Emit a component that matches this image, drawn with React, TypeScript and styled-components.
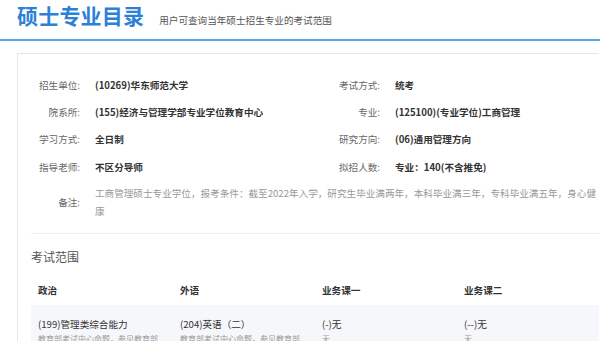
import styled, { createGlobalStyle } from "styled-components";

const GlobalStyle = createGlobalStyle`
  body {
    margin: 0;
    background: #fff;
    font-family: "Noto Sans CJK SC", "Liberation Sans", sans-serif;
    color: #333;
  }
`;

const Header = styled.div`
  display: flex;
  align-items: baseline;
  height: 41px;
  padding-left: 17px;
  border-bottom: 2px solid #5aa6e3;
  box-sizing: border-box;
`;

const Title = styled.h1`
  margin: 0;
  font-size: 21px;
  line-height: 30px;
  font-weight: 700;
  color: #2d80d8;
  letter-spacing: 0.2px;
`;

const Subtitle = styled.span`
  margin-left: 15px;
  font-size: 9.6px;
  color: #555;
`;

const Card = styled.div`
  margin: 12px 1px 0 17px;
  border-left: 1px solid #e6e6e6;
  border-top: 1px solid #e6e6e6;
  padding-left: 13px;
`;

const Info = styled.div`
  padding-top: 17px;
  padding-bottom: 13px;
  border-bottom: 1px solid #eee;
`;

const InfoGrid = styled.div`
  display: grid;
  grid-template-columns: 300px 1fr;
`;

const Field = styled.div<{ wide?: boolean }>`
  display: flex;
  align-items: center;
  grid-column: ${p => (p.wide ? "1 / -1" : "auto")};
  min-height: 27.3px;
  margin-top: ${p => (p.wide ? "4px" : "0")};
`;

const Label = styled.span`
  width: 49px;
  flex: none;
  text-align: right;
  font-size: 9.6px;
  color: #666;
  white-space: nowrap;
`;

const Value = styled.span<{ muted?: boolean }>`
  margin-left: 15px;
  font-size: 9.6px;
  line-height: 18px;
  font-weight: ${p => (p.muted ? 400 : 700)};
  color: ${p => (p.muted ? "#999" : "#333")};
`;

const SectionTitle = styled.h2`
  margin: 13px 0 0;
  font-size: 12px;
  line-height: 20px;
  font-weight: 400;
  color: #555;
`;

const Table = styled.div`
  margin-top: 8px;
`;

const TableRow = styled.div<{ head?: boolean }>`
  display: grid;
  grid-template-columns: repeat(4, 1fr);
  background: ${p => (p.head ? "#fff" : "#f5f7fa")};
  height: ${p => (p.head ? "30px" : "auto")};
  align-items: ${p => (p.head ? "center" : "start")};
  padding-top: ${p => (p.head ? "0" : "11px")};
`;

const HeadCell = styled.div`
  padding-left: 7px;
  font-size: 9.6px;
  font-weight: 700;
  color: #333;
`;

const Cell = styled.div`
  padding: 0 15px 0 7px;
`;

const CellMain = styled.div`
  font-size: 9.6px;
  line-height: 16px;
  color: #333;
`;

const CellDesc = styled.div`
  font-size: 8px;
  line-height: 14px;
  color: #999;
`;

const fields = [
  ["招生单位:", "(10269)华东师范大学"],
  ["考试方式:", "统考"],
  ["院系所:", "(155)经济与管理学部专业学位教育中心"],
  ["专业:", "(125100)(专业学位)工商管理"],
  ["学习方式:", "全日制"],
  ["研究方向:", "(06)通用管理方向"],
  ["指导老师:", "不区分导师"],
  ["拟招人数:", "专业：140(不含推免)"],
];

const subjects = [
  ["政治", "(199)管理类综合能力", "教育部考试中心命题，参见教育部考试大纲"],
  ["外语", "(204)英语（二）", "教育部考试中心命题，参见教育部考试大纲"],
  ["业务课一", "(-)无", "无"],
  ["业务课二", "(--)无", "无"],
];

export default function App() {
  return (
    <>
      <GlobalStyle />
      <Header>
        <Title>硕士专业目录</Title>
        <Subtitle>用户可查询当年硕士招生专业的考试范围</Subtitle>
      </Header>
      <Card>
        <Info>
          <InfoGrid>
            {fields.map(([label, value]) => (
              <Field key={label}>
                <Label>{label}</Label>
                <Value>{value}</Value>
              </Field>
            ))}
            <Field wide>
              <Label>备注:</Label>
              <Value muted>
                工商管理硕士专业学位，报考条件：截至2022年入学，研究生毕业满两年，本科毕业满三年，专科毕业满五年，身心健康
              </Value>
            </Field>
          </InfoGrid>
        </Info>
        <SectionTitle>考试范围</SectionTitle>
        <Table>
          <TableRow head>
            {subjects.map(([head]) => (
              <HeadCell key={head}>{head}</HeadCell>
            ))}
          </TableRow>
          <TableRow>
            {subjects.map(([head, main, desc]) => (
              <Cell key={head}>
                <CellMain>{main}</CellMain>
                <CellDesc>{desc}</CellDesc>
              </Cell>
            ))}
          </TableRow>
        </Table>
      </Card>
    </>
  );
}
